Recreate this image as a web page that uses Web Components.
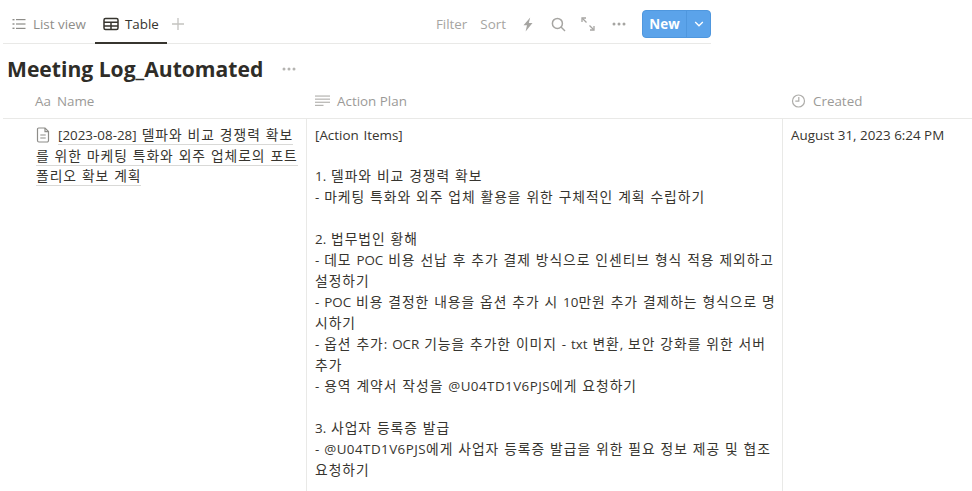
<!DOCTYPE html>
<html lang="ko">
<head>
<meta charset="utf-8">
<title>Meeting Log_Automated</title>
<style>
    html, body { margin: 0; height: 100%; background: #fff; overflow: hidden; }
    body { font-family: "Open Sans", "Noto Sans CJK KR", sans-serif; color: #37352f; }
</style>
</head>
<body>
<db-page></db-page>
<script>
const ICONS = {
    list: `<svg width="14" height="14" viewBox="0 0 14 14" fill="currentColor"><rect x="0.5" y="2" width="2" height="1.4"/><rect x="4" y="2" width="9.5" height="1.2"/><rect x="0.5" y="6.3" width="2" height="1.4"/><rect x="4" y="6.4" width="9.5" height="1.2"/><rect x="0.5" y="10.6" width="2" height="1.4"/><rect x="4" y="10.8" width="9.5" height="1.2"/></svg>`,
    table: `<svg width="16" height="14" viewBox="0 0 16 14" fill="none" stroke="currentColor" stroke-width="1.5"><rect x="1" y="1.5" width="14" height="11" rx="1.5"/><path d="M1 5.2H15M1 9H15M8 5.2V12.5"/></svg>`,
    plus: `<svg width="12" height="12" viewBox="0 0 12 12" fill="none" stroke="currentColor" stroke-width="1.3"><path d="M6 0V12M0 6H12"/></svg>`,
    bolt: `<svg width="12" height="15" viewBox="0 0 12 15" fill="currentColor"><path d="M8.2 0.5 1.5 8.2H5L3.6 14.5 10.5 6H6.8Z"/></svg>`,
    search: `<svg width="15" height="15" viewBox="0 0 15 15" fill="none" stroke="currentColor" stroke-width="1.5"><circle cx="6.4" cy="6.4" r="5"/><path d="M10 10 14 14"/></svg>`,
    expand: `<svg width="14" height="14" viewBox="0 0 14 14" fill="none" stroke="currentColor" stroke-width="1.3"><path d="M1.5 1.5 5.5 5.5M8.5 8.5 12.5 12.5"/><path d="M1 5V1H5M13 9V13H9" /></svg>`,
    dots: `<svg width="14" height="4" viewBox="0 0 14 4" fill="currentColor"><circle cx="2" cy="2" r="1.5"/><circle cx="7" cy="2" r="1.5"/><circle cx="12" cy="2" r="1.5"/></svg>`,
    page: `<svg width="14" height="16" viewBox="0 0 14 16" fill="none" stroke="currentColor" stroke-width="1.2"><path d="M2.6 1H9L12.5 4.6V13.5A1.5 1.5 0 0 1 11 15H3A1.5 1.5 0 0 1 1.5 13.5V2.1A1.1 1.1 0 0 1 2.6 1Z"/><path d="M9 1V4.6H12.5M4.3 8H9.7M4.3 11H9.7"/></svg>`,
    chevron: `<svg width="10" height="6" viewBox="0 0 10 6" fill="none" stroke="currentColor" stroke-width="1.3"><path d="M1.2 1 5 4.8 8.8 1"/></svg>`,
};

// hangul runs get their own span, the latin font is narrower than the hangul one needs to be
// "|" marks where a line wraps, so that no span lies over two lines
const hangul = (text) =>
    text
        .split("|")
        .map((part) =>
            part
                .replace(/[가-힣]+( [가-힣]+)*/g, (m) => `<span class="k">${m}</span>`)
                .replace(/@U04TD1V6PJS/g, (m) => `<span class="id">${m}</span>`)
        )
        .join("");

const PLAN = `[Action Items]

1. 델파와 비교 경쟁력 확보
- 마케팅 특화와 외주 업체 활용을 위한 구체적인 계획 수립하기

2. 법무법인 황해
- 데모 POC 비용 선납 후 추가 결제 방식으로 인센티브 형식 적용 제외하고 |설정하기
- POC 비용 결정한 내용을 옵션 추가 시 10만원 추가 결제하는 형식으로 명|시하기
- 옵션 추가: OCR 기능을 추가한 이미지 - txt 변환, 보안 강화를 위한 서버 |추가
- 용역 계약서 작성을 @U04TD1V6PJS에게 요청하기

3. 사업자 등록증 발급
- @U04TD1V6PJS에게 사업자 등록증 발급을 위한 필요 정보 제공 및 협조 |요청하기`;

class DbToolbar extends HTMLElement {
    constructor() {
        super();
        this.attachShadow({ mode: "open" }).innerHTML = `
        <style>
            :host { display: flex; justify-content: space-between; width: 708px; height: 43px; padding-top: 5px; box-sizing: border-box; margin-left: 3px; margin-bottom: 1px; box-shadow: 0 1px 0 #e9e9e7; font-size: 13.4px; }
            .tabs { display: flex; align-items: flex-start; }
            .tools { display: flex; align-items: center; }
            .tab { display: flex; align-items: center; gap: 7px; height: 38px; padding: 0 9px; box-sizing: border-box; color: #8e8d89; }
            .tab.on { color: #37352f; border-bottom: 2px solid #37352f; height: 39px; gap: 6px; padding: 0 8px; font-weight: 500; }
            .add { color: #c4c3c0; height: 38px; align-items: center; margin-left: 5px; display: flex; }
            .tools { color: #a6a5a2; }
            .tools span { margin-right: 13px; }
            .tools svg { display: block; }
            .new { display: flex; align-items: center; height: 28px; width: 69px; background: #5ba3ea; border: 1px solid #4f97de; border-radius: 4px; color: #fff; box-sizing: border-box; }
            .new b { flex: 1; text-align: center; line-height: 26px; font-weight: 700; font-size: 13.4px; }
            .new i { display: flex; align-items: center; justify-content: center; width: 23px; height: 26px; border-left: 1px solid #4f97de; }
        </style>
        <div class="tabs">
            <div class="tab">${ICONS.list}List view</div>
            <div class="tab on">${ICONS.table}Table</div>
            <div class="add">${ICONS.plus}</div>
        </div>
        <div class="tools">
            <span>Filter</span><span style="margin-right:16px">Sort</span>
            ${ICONS.bolt}
            <div style="margin-left:17px">${ICONS.search}</div>
            <div style="margin-left:15px">${ICONS.expand}</div>
            <div style="margin-left:17px">${ICONS.dots}</div>
            <div class="new" style="margin-left:16px"><b>New</b><i>${ICONS.chevron}</i></div>
        </div>`;
    }
}
customElements.define("db-toolbar", DbToolbar);

class DbTitle extends HTMLElement {
    constructor() {
        super();
        this.attachShadow({ mode: "open" }).innerHTML = `
        <style>
            :host { display: flex; align-items: center; height: 47px; padding: 3px 0 0 7px; box-sizing: border-box; gap: 19px; }
            h1 { margin: 0; font-size: 21.1px; font-weight: 700; color: #2f2d28; line-height: 1; }
            span { display: flex; color: #b5b4b1; }
        </style>
        <h1><slot></slot></h1><span>${ICONS.dots}</span>`;
    }
}
customElements.define("db-title", DbTitle);

class DbHead extends HTMLElement {
    constructor() {
        super();
        this.attachShadow({ mode: "open" }).innerHTML = `
        <style>
            :host { display: flex; align-items: center; gap: 7px; height: 20px; padding-left: 8px; color: #9b9a97; font-size: 13.4px; white-space: nowrap; }
            ::slotted(svg) { color: #aeadaa; flex: none; }
        </style>
        <slot name="icon"></slot><slot></slot>`;
    }
}
customElements.define("db-head", DbHead);

class DbTable extends HTMLElement {
    constructor() {
        super();
        const planLines = PLAN.split("\n")
            .map((line) => `<div>${hangul(line) || "&nbsp;"}</div>`)
            .join("");
        this.attachShadow({ mode: "open" }).innerHTML = `
        <style>
            :host { display: grid; grid-template-columns: 304px 476px 1fr; grid-template-rows: 28px 1fr; flex: 1; min-height: 0; margin-left: 3px; color: #37352f; }
            .hd { border-bottom: 1px solid #e9e9e7; box-sizing: border-box; }
            .cell { border-right: 1px solid #e9e9e7; box-sizing: border-box; padding: 6px 8px; font-size: 13.4px; line-height: 20px; overflow: hidden; }
            .cell:last-child { border-right: 0; white-space: nowrap; }
            .name { padding: 6px 4px 6px 33px; word-spacing: 1.6px; line-height: 20.5px; }
            .name .u { border-bottom: 1px solid #d9d9d7; }
            .name svg { color: #8e8d89; vertical-align: -3px; margin-right: 8px; }
            .plan { line-height: 21px; padding: 5px 5px 6px 8px; word-spacing: 1.4px; }
            .plan div:first-child { padding-top: 1px; margin-bottom: -1px; }
            .k { font-size: 13.8px; letter-spacing: .96px; word-spacing: .4px; line-height: 19px; }
            .id { letter-spacing: .45px; }
        </style>
        <div class="hd"><db-head style="padding-left:32px;gap:6px"><span slot="icon">Aa</span>Name</db-head></div>
        <div class="hd"><db-head><svg slot="icon" width="15" height="13" viewBox="0 0 15 13" fill="currentColor"><rect y="0.5" width="15" height="1.1"/><rect y="3.6" width="15" height="1.1"/><rect y="6.7" width="15" height="1.1"/><rect y="9.8" width="8.5" height="1.1"/></svg>Action Plan</db-head></div>
        <div class="hd"><db-head><svg slot="icon" width="15" height="14" viewBox="0 0 15 14" fill="none" stroke="currentColor" stroke-width="1.2"><circle cx="7.5" cy="7" r="6"/><path d="M7.8 3V7.2H4.3"/></svg>Created</db-head></div>
        <div class="cell name">${ICONS.page}<span class="u">${hangul("[2023-08-28] 델파와 비교 경쟁력 확보|를 위한 마케팅 특화와 외주 업체로의 포트|폴리오 확보 계획")}</span></div>
        <div class="cell plan">${planLines}</div>
        <div class="cell">August 31, 2023 6:24 PM</div>`;
    }
}
customElements.define("db-table", DbTable);

class DbPage extends HTMLElement {
    constructor() {
        super();
        this.attachShadow({ mode: "open" }).innerHTML = `
        <style>
            :host { display: flex; flex-direction: column; width: 972px; height: 491px; overflow: hidden; }
        </style>
        <db-toolbar></db-toolbar>
        <db-title>Meeting Log_Automated</db-title>
        <db-table></db-table>`;
    }
}
customElements.define("db-page", DbPage);
</script>
</body>
</html>
